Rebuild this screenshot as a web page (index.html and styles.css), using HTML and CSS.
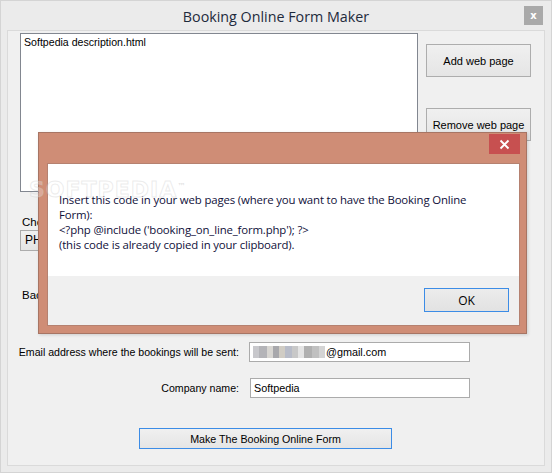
FILE: index.html
```html
<!DOCTYPE html>
<html>
<head>
<meta charset="utf-8">
<link rel="stylesheet" href="styles.css">
</head>
<body>
<div class="window">
  <div class="titlebar">
    <div class="title">Booking Online Form Maker</div>
    <div class="close-main">x</div>
  </div>
  <div class="client">
    <div class="top-row">
      <div class="listbox">
        <div class="list-item">Softpedia description.html</div>
      </div>
      <div class="side-buttons">
        <div class="btn side-btn">Add web page</div>
        <div class="btn side-btn second">Remove web page</div>
      </div>
    </div>
    <div class="field-label choose">Choose:</div>
    <div class="combo">PHP</div>
    <div class="field-label back">Back:</div>
    <div class="row email-row">
      <div class="row-label">Email address where the bookings will be sent:</div>
      <div class="textbox email-box"><span class="blur"><i class="b1"></i><i class="b2"></i><i class="b3"></i><i class="b4"></i><i class="b5"></i><i class="b6"></i><i class="b7"></i><i class="b8"></i><i class="b9"></i><i class="b10"></i><i class="b11"></i></span>@gmail.com</div>
    </div>
    <div class="row company-row">
      <div class="row-label">Company name:</div>
      <div class="textbox company-box">Softpedia</div>
    </div>
    <div class="make-wrap">
      <div class="btn make-btn">Make The Booking Online Form</div>
    </div>
  </div>

  <div class="dialog">
    <div class="dialog-caption">
      <div class="close-dialog">
        <svg width="11" height="11" viewBox="0 0 11 11"><path d="M1.5 1.5 L9.5 9.5 M9.5 1.5 L1.5 9.5" stroke="#fff" stroke-width="1.8"/></svg>
      </div>
    </div>
    <div class="dialog-body">
      <div class="dialog-msg">
        Insert this code in your web pages (where you want to have the Booking Online<br>
        Form):<br>
        &lt;?php @include ('booking_on_line_form.php'); ?&gt;<br>
        (this code is already copied in your clipboard).
      </div>
      <div class="dialog-footer">
        <div class="ok-btn">OK</div>
      </div>
    </div>
  </div>

  <div class="watermark">
    <div class="wm-big">SOFTPEDIA<sup>™</sup></div>
  </div>
</div>
</body>
</html>
```

FILE: styles.css
```css
* { box-sizing: border-box; }
html, body { margin: 0; padding: 0; }
body { width: 552px; height: 473px; overflow: hidden; background: #ebebeb; }

.window {
  position: relative;
  width: 552px;
  height: 473px;
  background: #ebebeb;
  border: 1px solid #d4d4d4;
  display: flex;
  flex-direction: column;
  font-family: "Liberation Sans", Arial, sans-serif;
  font-size: 11px;
  color: #000;
}

.titlebar {
  height: 29px;
  display: flex;
  align-items: center;
  justify-content: center;
  position: relative;
}
.title {
  font-family: "Open Sans", "Noto Sans", sans-serif;
  font-size: 14.3px;
  color: #1e2a3c;
  margin-top: 1px;
}
.close-main {
  position: absolute;
  left: 523px;
  top: 5px;
  width: 19px;
  height: 19px;
  background: #a9a9a9;
  color: #fff;
  font-family: "DejaVu Sans", sans-serif;
  font-weight: bold;
  font-size: 10px;
  display: flex;
  align-items: center;
  justify-content: center;
}

.client {
  margin: 0 6px 6px 6px;
  flex: 1;
  background: #f0f0f0;
  border: 1px solid #dadada;
  display: flex;
  flex-direction: column;
}

.top-row {
  display: flex;
  margin: 2px 0 0 12px;
}
.listbox {
  width: 398px;
  height: 159px;
  background: #fff;
  border: 1px solid #828790;
  padding: 2px 3px;
}
.list-item { font-size: 10.6px; line-height: 13px; }

.side-buttons {
  display: flex;
  flex-direction: column;
  margin: 11px 0 0 8px;
}
.btn {
  background: linear-gradient(#f0f0f0, #e5e5e5);
  border: 1px solid #adadad;
  display: flex;
  align-items: center;
  justify-content: center;
  font-size: 11px;
  white-space: nowrap;
}
.side-btn { width: 105px; height: 33px; }
.side-btn.second { margin-top: 31px; }

.field-label { margin-left: 14px; line-height: 13px; font-size: 11.5px; }
.choose { margin-top: 24px; }
.combo {
  margin: 1px 0 0 12px;
  width: 200px;
  height: 21px;
  border: 1px solid #acacac;
  background: linear-gradient(#f0f0f0, #e5e5e5);
  padding: 2px 0 0 4px;
  font-size: 12px;
}
.back { margin-top: 38px; }

.row {
  display: flex;
  align-items: center;
}
.row-label {
  width: 231px;
  text-align: right;
  font-size: 10.6px;
  white-space: nowrap;
}
.email-row { margin-top: 40px; }
.company-row { margin-top: 16px; }
.textbox {
  height: 20px;
  width: 221px;
  background: #fff;
  border: 1px solid #ababab;
  display: flex;
  align-items: center;
  padding-left: 3px;
  font-size: 10.8px;
  white-space: nowrap;
}
.email-box { margin-left: 10px; }
.company-box { margin-left: 11px; width: 220px; }

.blur { display: flex; height: 12px; margin-right: 1px; }
.blur i { display: block; width: 6px; height: 12px; }
.blur .b1 { background: #c8c8cc; }
.blur .b2 { background: #b4b4b8; width: 8px; }
.blur .b3 { background: #d8d6d2; }
.blur .b4 { background: #a8a8ac; }
.blur .b5 { background: #d0ccc4; }
.blur .b6 { background: #b8bcc8; width: 7px; }
.blur .b7 { background: #c8c8c8; }
.blur .b8 { background: #e4e4e4; }
.blur .b9 { background: #b0b0b0; width: 8px; }
.blur .b10 { background: #c0c0c0; width: 7px; }
.blur .b11 { background: #d4d4d4; }

.make-wrap { margin: 30px 0 0 131px; }
.make-btn {
  width: 253px;
  height: 21px;
  border: 1px solid #3c8ce6;
  font-size: 10.7px;
}

/* dialog overlay */
.dialog {
  position: absolute;
  left: 37px;
  top: 131px;
  width: 489px;
  height: 202px;
  background: #cf8d76;
  border: 1px solid #a77564;
  box-shadow: 1px 1px 3px rgba(0,0,0,0.15);
  display: flex;
  flex-direction: column;
  padding: 0 6px 7px 8px;
}
.dialog-caption {
  height: 30px;
  display: flex;
  justify-content: flex-end;
  align-items: flex-start;
}
.close-dialog {
  margin-top: 1px;
  width: 31px;
  height: 20px;
  background: #c75050;
  display: flex;
  align-items: center;
  justify-content: center;
}
.dialog-body {
  flex: 1;
  border: 1px solid #b58170;
  background: #fff;
  display: flex;
  flex-direction: column;
}
.dialog-msg {
  height: 112px;
  padding: 28px 0 0 11px;
  font-family: "Open Sans", "Noto Sans", sans-serif;
  font-size: 11.4px;
  letter-spacing: -0.15px;
  line-height: 15px;
  color: #10103a;
}
.dialog-footer {
  flex: 1;
  background: #f0f0f0;
  display: flex;
  justify-content: flex-end;
  padding: 12px 10px 0 0;
}
.ok-btn {
  width: 85px;
  height: 24px;
  border: 1px solid #3c8ce6;
  background: linear-gradient(#ececec, #e2e2e2);
  display: flex;
  align-items: center;
  justify-content: center;
  font-family: "Open Sans", "Noto Sans", sans-serif;
  font-size: 12px;
  color: #000;
}

.watermark {
  position: absolute;
  left: 28px;
  top: 176px;
  pointer-events: none;
}
.wm-big {
  font-family: "DejaVu Sans", sans-serif;
  font-size: 22px;
  font-weight: bold;
  letter-spacing: 1px;
  -webkit-text-stroke: 1px rgba(200,200,200,0.35);
  color: rgba(255,255,255,0.25);
}
.wm-big sup { font-size: 8px; -webkit-text-stroke: 0; color: rgba(180,180,180,0.4); }
```
